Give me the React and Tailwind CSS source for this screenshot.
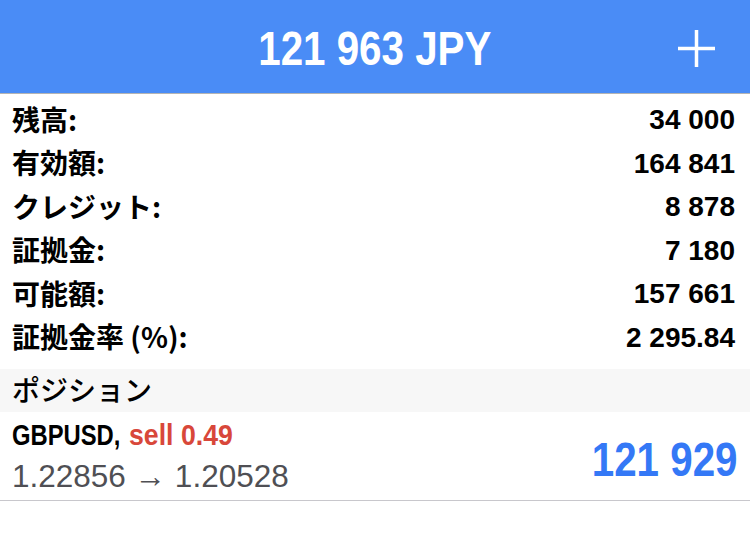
import React from "react";

const rows = [
  ["残高:", "34 000"],
  ["有効額:", "164 841"],
  ["クレジット:", "8 878"],
  ["証拠金:", "7 180"],
  ["可能額:", "157 661"],
  ["証拠金率 (%):", "2 295.84"],
];

export default function App() {
  return (
    <div className="w-[750px] h-[550px] bg-white overflow-hidden">
      <header className="h-[94px] bg-[#4a8cf6] border-b border-[#b4b4b4] grid grid-cols-[1fr_auto_1fr] items-center">
        <div />
        <div className="font-['Liberation_Sans',Arial,sans-serif] font-bold text-[48px] leading-none text-white pt-[5px] scale-x-[0.84] whitespace-nowrap">
          121 963 JPY
        </div>
        <div className="flex justify-end pr-[35px] pt-[3px]">
          <svg width="37" height="37" viewBox="0 0 37 37">
            <rect x="16.75" y="0" width="3.5" height="37" fill="#fff" />
            <rect x="0" y="16.75" width="37" height="3.5" fill="#fff" />
          </svg>
        </div>
      </header>

      <section className="pt-[4.5px] pb-[9.5px] pl-[12px] pr-[15px]">
        {rows.map(([label, value]) => (
          <div key={label} className="h-[43.5px] flex items-center justify-between">
            <span className="font-['Noto_Sans_CJK_JP',sans-serif] font-bold text-[28px] leading-none text-black -mt-[3px]">
              {label}
            </span>
            <span className="font-['Liberation_Sans',Arial,sans-serif] font-bold text-[28px] leading-none text-black">
              {value}
            </span>
          </div>
        ))}
      </section>

      <div className="h-[43px] bg-[#f7f7f7] flex items-center pl-[12px]">
        <span className="font-['Noto_Sans_CJK_JP',sans-serif] font-medium text-[28px] leading-none text-black -mt-[3px]">
          ポジション
        </span>
      </div>

      <div className="h-[89px] border-b border-[#c8c7cc] flex items-center justify-between pl-[12px] pr-[12px]">
        <div className="flex flex-col self-start pt-[6px]">
          <div className="flex items-center h-[34px] font-['Liberation_Sans',Arial,sans-serif] font-bold text-[29px] leading-[34px] whitespace-nowrap">
            <span className="inline-block w-[117px] text-black origin-left scale-x-[0.82]">GBPUSD,</span>
            <span className="inline-block text-[#d8473a] origin-left scale-x-[0.92]">sell 0.49</span>
          </div>
          <div className="font-['Liberation_Sans',Arial,sans-serif] text-[31.5px] leading-[49px] text-[#4f4f54] whitespace-nowrap">
            1.22856 → 1.20528
          </div>
        </div>
        <div className="font-['Liberation_Sans',Arial,sans-serif] font-bold text-[48px] leading-none text-[#3478f6] pt-[8px] origin-right scale-x-[0.84] whitespace-nowrap">
          121 929
        </div>
      </div>
    </div>
  );
}
